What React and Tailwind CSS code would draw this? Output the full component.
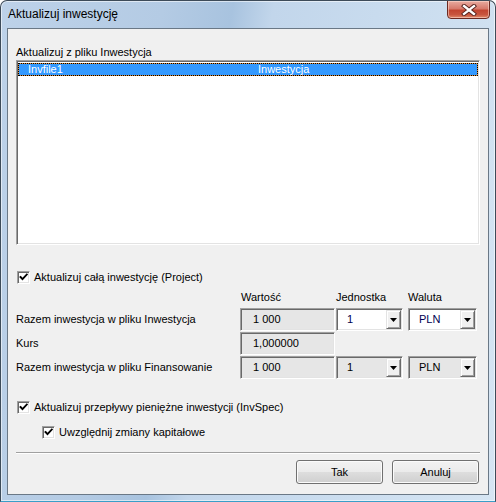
import React from "react";

const sunken =
  "border border-t-[#a0a0a0] border-l-[#a0a0a0] border-r-white border-b-white shadow-[inset_1px_1px_0_#696969,inset_-1px_-1px_0_#e3e3e3]";

function Checkbox({ label, className = "" }) {
  return (
    <div className={"flex items-center h-[14px] " + className}>
      <div className={"w-[13px] h-[13px] bg-white flex items-center justify-center " + sunken}>
        <svg width="9" height="9" viewBox="0 0 9 9">
          <path d="M1.5 4 L3.5 6.2 L7.8 1.5" stroke="#000" strokeWidth="1.9" fill="none" strokeLinecap="square" />
        </svg>
      </div>
      <span className="ml-[4px] leading-[14px]">{label}</span>
    </div>
  );
}

function Combo({ value, white, width }) {
  return (
    <div
      className={
        "h-[23px] flex items-stretch " +
        width +
        " " +
        sunken +
        (white ? " bg-white text-[#000050]" : " bg-[#e6e6e6] text-black")
      }
    >
      <div className="flex-1 flex items-center pl-[10px]">{value}</div>
      <div className="my-[1px] mr-[1px] w-[15px] bg-[#f0f0f0] border border-t-[#e3e3e3] border-l-[#e3e3e3] border-r-[#696969] border-b-[#696969] shadow-[inset_1px_1px_0_#ffffff,inset_-1px_-1px_0_#a0a0a0] flex items-center justify-center">
        <svg width="7" height="4" viewBox="0 0 7 4">
          <path d="M0 0 H7 L3.5 4 Z" fill="#000" />
        </svg>
      </div>
    </div>
  );
}

function Field({ value }) {
  return (
    <div className={"h-[23px] w-[95px] bg-[#e6e6e6] flex items-center pl-[12px] " + sunken}>{value}</div>
  );
}

function VButton({ children }) {
  return (
    <div className="w-[87px] h-[24px] rounded-[3px] border border-[#707070] shadow-[inset_0_0_0_1px_#fbfbfb] bg-[linear-gradient(180deg,#f2f2f2_0%,#ebebeb_48%,#dddddd_52%,#cfcfcf_100%)] flex items-center justify-center">
      {children}
    </div>
  );
}

export default function App() {
  return (
    <div
      className="w-[496px] h-[502px] flex flex-col rounded-t-[7px] border border-[#3d4b59] border-b-[#3a9ec8] bg-[linear-gradient(100deg,#bdd2e9_0%,#b4cbe4_28%,#a8c3df_40%,#c2d6eb_47%,#c8dbee_65%,#d6e5f3_100%)] shadow-[inset_0_0_0_1px_rgba(255,255,255,0.55)] overflow-hidden"
      style={{ fontFamily: '"Liberation Sans", Arial, sans-serif' }}
    >
      {/* title bar */}
      <div className="h-[27px] flex items-start shrink-0">
        <span className="ml-[7px] mt-[5px] text-[12px] leading-[16px] text-black">Aktualizuj inwestycję</span>
        <div className="ml-auto mr-[5px] -mt-px w-[43px] h-[19px] rounded-b-[4px] border border-[#6b2a22] shadow-[inset_0_0_0_1px_rgba(255,220,210,0.55)] bg-[linear-gradient(180deg,#e9aba0_0%,#d77a6c_45%,#c24530_55%,#c8553e_80%,#e08a6a_100%)] flex items-center justify-center">
          <svg width="16" height="12" viewBox="0 0 16 12">
            <path d="M3 2 L13 10 M13 2 L3 10" stroke="#5a2620" strokeWidth="4.2" strokeLinecap="square" />
            <path d="M3 2 L13 10 M13 2 L3 10" stroke="#ffffff" strokeWidth="2.3" strokeLinecap="square" />
          </svg>
        </div>
      </div>

      {/* client area */}
      <div className="mx-[6px] mb-[6px] flex-1 border border-[#6a7886] bg-[#f0f0f0] flex flex-col px-[8px] text-[11px] text-black">
        <div className="mt-[16px] h-[15px] leading-[14px]">Aktualizuj z pliku Inwestycja</div>

        <div className={"h-[185px] bg-white pt-[1px] " + sunken + " px-[1px]"}>
          <div className="mt-[1px] bg-[#d98a3a]">
            <div className="h-[13px] border border-dotted border-black bg-[#3399ff] bg-clip-padding flex items-center text-white leading-[11px]">
              <span className="ml-[9px] w-[230px]">Invfile1</span>
              <span>Inwestycja</span>
            </div>
          </div>
        </div>

        <Checkbox className="mt-[25px] ml-[1px]" label="Aktualizuj całą inwestycję (Project)" />

        <div className="mt-[6px] h-[14px] flex leading-[14px]">
          <span className="ml-[225px] w-[95px]">Wartość</span>
          <span className="w-[72px]">Jednostka</span>
          <span>Waluta</span>
        </div>

        <div className="mt-[4px] flex items-center h-[23px]">
          <span className="w-[224px]">Razem inwestycja w pliku Inwestycja</span>
          <Field value="1 000" />
          <div className="ml-[1px]">
            <Combo value="1" white width="w-[67px]" />
          </div>
          <div className="ml-[5px]">
            <Combo value="PLN" white width="w-[69px]" />
          </div>
        </div>

        <div className="mt-[1px] flex items-center h-[23px]">
          <span className="w-[224px]">Kurs</span>
          <Field value="1,000000" />
        </div>

        <div className="mt-[1px] flex items-center h-[23px]">
          <span className="w-[224px]">Razem inwestycja w pliku Finansowanie</span>
          <Field value="1 000" />
          <div className="ml-[1px]">
            <Combo value="1" width="w-[67px]" />
          </div>
          <div className="ml-[5px]">
            <Combo value="PLN" width="w-[69px]" />
          </div>
        </div>

        <Checkbox className="mt-[21px] ml-[1px]" label="Aktualizuj przepływy pieniężne inwestycji (InvSpec)" />
        <Checkbox className="mt-[11px] ml-[26px]" label="Uwzględnij zmiany kapitałowe" />

        <div className="mt-[13px] h-[2px] border-t border-t-[#a0a0a0] border-b border-b-white" />

        <div className="mt-[6px] flex justify-end gap-[9px] pr-[1px]">
          <VButton>Tak</VButton>
          <VButton>Anuluj</VButton>
        </div>
      </div>
    </div>
  );
}
